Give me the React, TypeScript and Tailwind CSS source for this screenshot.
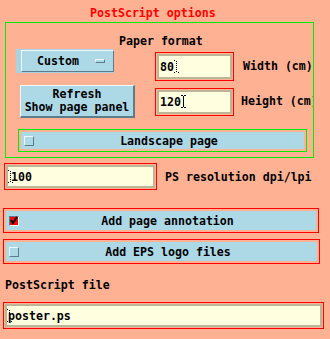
import React from 'react';

const Caret = ({ dotted }: { dotted?: boolean }) => (
    <svg width="5" height="14" viewBox="0 0 5 14" className="shrink-0">
        {dotted ? (
            <g fill="#000">
                <rect x="0" y="0" width="1" height="1" />
                <rect x="2" y="1" width="1" height="1" />
                <rect x="2" y="3" width="1" height="1" />
                <rect x="2" y="5" width="1" height="1" />
                <rect x="2" y="7" width="1" height="1" />
                <rect x="2" y="9" width="1" height="1" />
                <rect x="2" y="11" width="1" height="1" />
                <rect x="0" y="12" width="1" height="1" />
                <rect x="4" y="12" width="1" height="1" />
            </g>
        ) : (
            <g fill="#000">
                <rect x="0" y="0" width="2" height="1" />
                <rect x="3" y="0" width="2" height="1" />
                <rect x="2" y="1" width="1" height="11" />
                <rect x="0" y="12" width="2" height="1" />
                <rect x="3" y="12" width="2" height="1" />
            </g>
        )}
    </svg>
);

const Field = ({ className, children }: { className: string; children: React.ReactNode }) => (
    <div className={`border border-[#ff0000] p-px ${className}`}>
        <div className="h-full border-2 border-[#bdb597] bg-[#ffffe0] flex items-center overflow-hidden">
            {children}
        </div>
    </div>
);

const Check = ({ on }: { on?: boolean }) =>
    on ? (
        <div className="w-[10px] h-[10px] shrink-0 border border-t-[#5e7d8a] border-l-[#5e7d8a] border-b-white border-r-white bg-[#ff0000] relative">
            <svg width="10" height="10" viewBox="0 0 10 10" className="absolute -left-px -top-px">
                <path d="M2 4 L4 7 L8 1" stroke="#000" strokeWidth="2" fill="none" />
            </svg>
        </div>
    ) : (
        <div className="w-[10px] h-[10px] shrink-0 border border-t-[#eef8fb] border-l-[#eef8fb] border-b-[#5e7d8a] border-r-[#5e7d8a] bg-[#add8e6]" />
    );

const Toggle = ({ label, on, frame, className }: { label: string; on?: boolean; frame: string; className: string }) => (
    <div className={`border p-[2px] ${frame} ${className}`}>
        <div className="h-full bg-[#add8e6] flex items-center pl-[3px]">
            <Check on={on} />
            <div className="flex-1 text-center">{label}</div>
        </div>
    </div>
);

const App = () => {
    return (
        <div className="w-[330px] h-[339px] bg-[#ffb193] text-black font-['DejaVu_Sans_Mono',monospace] font-bold text-[11.6px] leading-[14px] overflow-hidden">
            {/* Title */}
            <div className="pt-[6px] pl-[90px] text-[#ff0000]">PostScript options</div>

            {/* Paper format frame */}
            <div className="mt-[2px] ml-[5px] w-[309px] h-[136px] border border-[#00ee00] overflow-hidden">
                <div className="mt-[11px] pl-[113px]">Paper format</div>

                <div className="mt-px flex">
                    <div className="ml-[10px] w-[119px] shrink-0">
                        {/* Option menu */}
                        <div className="w-[98px] h-[24px] bg-[#a9d3e1] pl-[5px] py-px">
                            <div className="h-full bg-[#add8e6] border border-t-[#eef8fb] border-l-[#eef8fb] border-b-[#5e7d8a] border-r-[#5e7d8a] flex items-center">
                                <span className="ml-[15px]">Custom</span>
                                <span className="ml-[16px] w-[10px] h-[4px] border border-t-[#eef8fb] border-l-[#eef8fb] border-b-[#5e7d8a] border-r-[#5e7d8a]" />
                            </div>
                        </div>
                        <div className="mt-[12px] ml-[4px] w-[115px] h-[33px] bg-[#add8e6] border-t border-l border-t-[#eef8fb] border-l-[#eef8fb] border-b-2 border-r-2 border-b-[#5e7d8a] border-r-[#5e7d8a] flex flex-col items-center justify-center leading-[13px]">
                            <div>Refresh</div>
                            <div>Show page panel</div>
                        </div>
                    </div>

                    <div className="ml-[20px] mt-[3px] flex flex-col gap-[7px]">
                        <div className="flex items-start">
                            <Field className="w-[79px] h-[29px] shrink-0">
                                <span className="ml-px">80</span>
                                <Caret dotted />
                            </Field>
                            <span className="ml-[9px] mt-[7px] whitespace-nowrap">Width (cm)</span>
                        </div>
                        <div className="flex items-start">
                            <Field className="w-[79px] h-[28px] shrink-0">
                                <span className="ml-px">120</span>
                                <Caret />
                            </Field>
                            <span className="ml-[7px] mt-[6px] whitespace-nowrap">Height (cm)</span>
                        </div>
                    </div>
                </div>

                <Toggle
                    label="Landscape page"
                    frame="border-[#00ee00]"
                    className="mt-[11px] ml-[12px] w-[289px] h-[23px]"
                />
            </div>

            {/* Resolution */}
            <div className="mt-[5px] flex items-center">
                <Field className="ml-[4px] w-[153px] h-[27px] shrink-0">
                    <Caret dotted />
                    <span className="-ml-[2px]">100</span>
                </Field>
                <span className="ml-[8px] whitespace-nowrap">PS resolution dpi/lpi</span>
            </div>

            <Toggle
                label="Add page annotation"
                on
                frame="border-[#ff0000]"
                className="mt-[18px] ml-[3px] w-[316px] h-[25px]"
            />
            <Toggle
                label="Add EPS logo files"
                frame="border-[#ff0000]"
                className="mt-[6px] ml-[3px] w-[317px] h-[25px]"
            />

            <div className="mt-[14px] pl-[5px]">PostScript file</div>

            <Field className="mt-[10px] ml-[3px] w-[321px] h-[27px]">
                <Caret dotted />
                <span className="-ml-[4px]">poster.ps</span>
            </Field>
        </div>
    );
};

export default App;
